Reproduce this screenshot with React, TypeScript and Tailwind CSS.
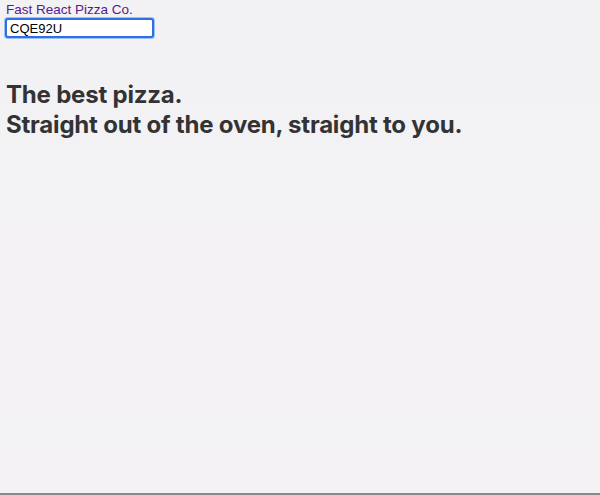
export default function App() {
  return (
    <div className="h-[495px] w-[600px] bg-gradient-to-b from-[#f2f1f3] to-[#f4f2f5] border-b-2 border-[#8a8a8a] flex flex-col font-['Inter',sans-serif]">
      <header className="flex flex-col items-start pl-[6px] pt-[2px] font-['Liberation_Sans',Arial,sans-serif]">
        <a href="#" className="text-[13.5px] leading-[16px] text-[#551a8b]">
          Fast React Pizza Co.
        </a>
        <input
          defaultValue="CQE92U"
          className="-ml-[1px] w-[149px] h-[20px] px-[3px] text-[13px] text-black bg-white border-2 border-[#2f6fe0] rounded-[3px] shadow-[0_0_0_1px_#9cc0f7] outline-none"
        />
      </header>
      <h1 className="mt-[42px] pl-[6px] text-[24px] leading-[30px] font-bold text-[#333335] tracking-[-0.2px]">
        The best pizza.
        <br />
        Straight out of the oven, straight to you.
      </h1>
    </div>
  );
}
